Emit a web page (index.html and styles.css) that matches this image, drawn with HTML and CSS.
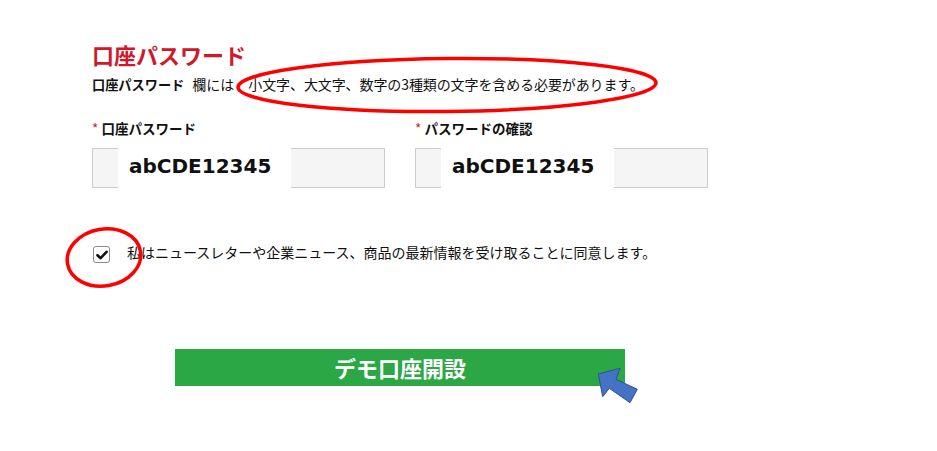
FILE: index.html
```html
<!DOCTYPE html>
<html lang="ja">
<head>
<meta charset="utf-8">
<link rel="stylesheet" href="styles.css">
</head>
<body>
<div class="page">
  <h2 class="title">口座パスワード</h2>
  <p class="desc"><b>口座パスワード</b><span class="gap1">欄には</span><span class="gap2">小文字、大文字、数字の3種類の文字を含める必要があります。</span></p>
  <div class="fields">
    <div class="field">
      <div class="label"><span class="req">*</span> 口座パスワード</div>
      <div class="input"><span class="val">abCDE12345</span></div>
    </div>
    <div class="field">
      <div class="label"><span class="req">*</span> パスワードの確認</div>
      <div class="input"><span class="val">abCDE12345</span></div>
    </div>
  </div>
  <div class="agree">
    <span class="box"><svg width="12" height="10" viewBox="0 0 12 10"><path d="M1.5 5.2 L4.6 8.2 L10.6 1.8" fill="none" stroke="#111" stroke-width="2.6" stroke-linecap="round" stroke-linejoin="round"/></svg></span>
    <span class="agree-text">私はニュースレターや企業ニュース、商品の最新情報を受け取ることに同意します。</span>
  </div>
  <div class="btn">デモ口座開設</div>
</div>
<svg class="overlay" width="937" height="451" viewBox="0 0 937 451">
  <ellipse cx="447" cy="85" rx="209" ry="26.5" fill="none" stroke="#f00" stroke-width="3.5" transform="rotate(-0.6 447 85)"/>
  <ellipse cx="104" cy="257.5" rx="37" ry="28.5" fill="none" stroke="#f00" stroke-width="3.5" transform="rotate(-10 104 257.5)"/>
  <polygon points="598.3,374 620,368.3 616,379.3 637.3,389.3 630,402.7 609.3,388.3 602.7,396.7" fill="#4472c4" stroke="#2f528f" stroke-width="1"/>
</svg>
</body>
</html>
```
FILE: styles.css
```css
html, body {
  margin: 0;
  padding: 0;
  background: #fff;
}
body {
  font-family: "Noto Sans CJK JP", "Noto Sans", sans-serif;
  color: #111;
  position: relative;
  width: 937px;
  height: 451px;
  overflow: hidden;
}
.page {
  padding: 39px 0 0 92px;
}
.title {
  margin: 0;
  font-size: 22px;
  line-height: 30px;
  font-weight: bold;
  color: #d3172a;
}
.desc {
  margin: 5px 0 0;
  font-size: 14px;
  line-height: 20px;
  white-space: nowrap;
}
.desc b {
  font-weight: bold;
  font-size: 13.2px;
}
.gap1 {
  margin-left: 8px;
}
.gap2 {
  margin-left: 14px;
  letter-spacing: -0.1px;
}
.fields {
  display: flex;
  gap: 30px;
  margin-top: 23px;
}
.field {
  width: 293px;
}
.label {
  font-size: 13.5px;
  line-height: 20px;
  font-weight: bold;
}
.req {
  color: #d3172a;
  font-weight: normal;
}
.input {
  margin-top: 10px;
  height: 38px;
  background: #f5f5f5;
  border: 1px solid #cccccc;
  display: flex;
}
.val {
  display: block;
  margin: -1px 0 -1px 25px;
  width: 162px;
  padding-left: 11px;
  background: #fff;
  font-family: "DejaVu Sans", sans-serif;
  font-weight: bold;
  font-size: 20px;
  line-height: 36px;
  color: #111;
}
.agree {
  display: flex;
  align-items: center;
  margin-top: 54px;
  height: 20px;
}
.box {
  width: 15px;
  height: 15px;
  border: 1px solid #8a8a8a;
  border-radius: 3px;
  background: #fff;
  display: flex;
  align-items: center;
  justify-content: center;
  margin-left: 1px;
  margin-top: 5px;
}
.agree-text {
  margin-left: 17px;
  font-size: 14px;
  line-height: 20px;
}
.btn {
  margin: 87px 0 0 83px;
  width: 450px;
  height: 37px;
  background: #2ba745;
  color: #fff;
  font-weight: bold;
  font-size: 22px;
  line-height: 37px;
  text-align: center;
}
.overlay {
  position: absolute;
  left: 0;
  top: 0;
  pointer-events: none;
}
```
